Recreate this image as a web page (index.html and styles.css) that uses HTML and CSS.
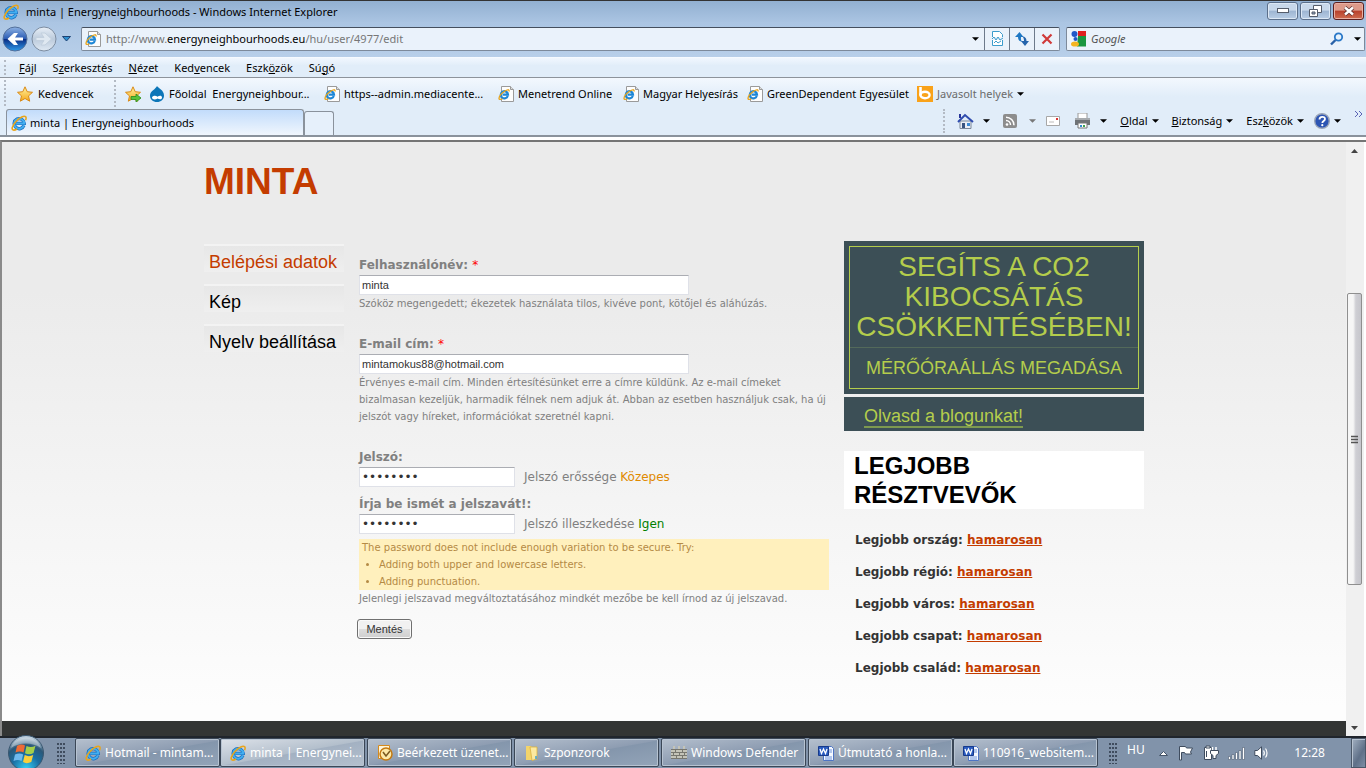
FILE: index.html
```html
<!DOCTYPE html>
<html lang="hu">
<head>
<meta charset="utf-8">
<title>minta | Energyneighbourhoods</title>
<link rel="stylesheet" href="styles.css">
</head>
<body>
<svg class="defs" aria-hidden="true">
  <defs>
    <linearGradient id="gStar" x1="0" y1="0" x2="0" y2="1"><stop offset="0" stop-color="#fff3a0"/><stop offset="1" stop-color="#f5a81c"/></linearGradient>
    <linearGradient id="gBack" x1="0" y1="0" x2="0" y2="1"><stop offset="0" stop-color="#8fb3e4"/><stop offset=".48" stop-color="#2c5db5"/><stop offset=".52" stop-color="#0b2f86"/><stop offset="1" stop-color="#2f9bea"/></linearGradient>
    <linearGradient id="gFwd" x1="0" y1="0" x2="0" y2="1"><stop offset="0" stop-color="#e8eff7"/><stop offset=".5" stop-color="#bccbdc"/><stop offset="1" stop-color="#dfe9f3"/></linearGradient>
    <radialGradient id="gOrb" cx=".5" cy=".95" r=".9"><stop offset="0" stop-color="#35d0f5"/><stop offset=".45" stop-color="#1a6fa3"/><stop offset=".75" stop-color="#2b5878"/><stop offset="1" stop-color="#b9cbd9"/></radialGradient>
  </defs>
  <symbol id="ie" viewBox="0 0 16 16">
    <path d="M12.9 10.4A5 5 0 1 1 13.2 8.4H5.2" fill="none" stroke="#1c6fc0" stroke-width="3.4"/>
    <path d="M12.9 10.4A5 5 0 1 1 13.2 8.4H5.2" fill="none" stroke="#41aef0" stroke-width="2"/>
    <path d="M14.6 5.2C16 1.8 14.2.4 10.8 2 6.500 4 2.200 9 1.300 12.500.6 15.400 3 15.800 6 14" fill="none" stroke="#e8a51c" stroke-width="1.600"/>
  </symbol>
  <symbol id="page" viewBox="0 0 16 16">
    <path d="M3.500.5h9l3 3v12h-12z" fill="#fdfdfd" stroke="#9a9a9a"/><path d="M12.500.5v3h3" fill="#ddd" stroke="#9a9a9a"/>
    <path d="M9.800 10A3.600 3.600 0 1 1 10 8.600H4.500" fill="none" stroke="#1d86d6" stroke-width="2.200"/>
    <path d="M11 5.500C11.500 3 9 3.500 6.500 5.200 3.500 7.400 1 10.500 1 12.500c0 1.500 2 1 3.500.2" fill="none" stroke="#e8a51c" stroke-width="1.300"/>
  </symbol>
  <symbol id="star" viewBox="0 0 16 16"><path d="M8 .8l2.200 4.900 5.300.6-4 3.600 1.200 5.300L8 12.500l-4.700 2.700 1.200-5.300-4-3.600 5.300-.6z" fill="url(#gStar)" stroke="#d98a17"/></symbol>
  <symbol id="down" viewBox="0 0 8 4"><path d="M0 0h8L4 4z" fill="currentColor"/></symbol>
  <symbol id="word" viewBox="0 0 16 16">
    <path d="M5.500 1.500h8l2 2v12h-10z" fill="#f4f8ff" stroke="#4d74c4"/><path d="M11 5h3M11 7h3M7 12h7M7 14h7" stroke="#6f93d8"/>
    <path d="M.5 1.500h10v9H.5z" fill="#2b5cc0" stroke="#16398a"/><path d="M2 4l1.500 4.500L5.500 4l2 4.500L9 4" fill="none" stroke="#fff" stroke-width="1.300"/>
  </symbol>
</svg>

<header class="browser">
  <div class="titlebar">
    <svg class="i16"><use href="#ie"/></svg>
    <span class="grow">minta | Energyneighbourhoods - Windows Internet Explorer</span>
    <div class="winbtns">
      <button type="button" aria-label="Kis méret"><svg width="12" height="6"><rect x=".5" y=".5" width="11" height="4" fill="#fff" stroke="#555d6b"/></svg></button>
      <button type="button" aria-label="Előző méret"><svg width="13" height="12"><path d="M4.500.5h8v7h-8z" fill="#fff" stroke="#555d6b"/><path d="M.5 4.500h8v7h-8z" fill="#fff" stroke="#555d6b"/><path d="M3 7h3v2H3z" fill="#8ea3bd" stroke="#555d6b"/></svg></button>
      <button type="button" class="close" aria-label="Bezárás"><svg width="12" height="10" viewBox="0 0 12 10"><path d="M2 1.500l8 7M10 1.500l-8 7" stroke="#5a3030" stroke-width="4"/><path d="M2 1.500l8 7M10 1.500l-8 7" stroke="#fff" stroke-width="2.400"/></svg></button>
    </div>
  </div>

  <div class="nav">
    <button type="button" class="plain" aria-label="Vissza"><svg width="26" height="26"><circle cx="13" cy="13" r="12" fill="url(#gBack)" stroke="#53709b"/><path d="M21 11.500h-8L16 7h-4L5.500 13l6.500 6h4l-3-4.500h8z" fill="#fff"/></svg></button>
    <button type="button" class="plain" aria-label="Előre"><svg width="26" height="26"><circle cx="13" cy="13" r="12" fill="url(#gFwd)" stroke="#7d8da1"/><path d="M5 11.500h8L10 7h4l6.500 6-6.500 6h-4l3-4.500H5z" fill="#dfe8f1" stroke="#c3d0de"/></svg></button>
    <button type="button" class="plain recent" aria-label="Legutóbbi lapok"><svg width="9" height="6"><path d="M.5.500h8l-4 4.500z" fill="#2d8fd0" stroke="#1d4274"/></svg></button>
    <div class="address">
      <svg class="i16"><use href="#page"/></svg>
      <div class="url grow" role="textbox" contenteditable="true" aria-label="Cím">http://www.<b>energyneighbourhoods.eu</b>/hu/user/4977/edit</div>
      <button type="button" class="plain drop" aria-label="Címlista"><svg class="tri"><use href="#down"/></svg></button>
      <button type="button" class="seg" aria-label="Kompatibilitási nézet"><svg width="13" height="15"><path d="M1.500 6V.5h7l3 3V6M1.500 9v5.500h10V9" fill="#fff" stroke="#3c9ccc"/><path d="M1 8l2-2 2 3 2-3 2 3 3-2M3 12l2-2 2 2 3-2" fill="none" stroke="#3c9ccc"/></svg></button>
      <button type="button" class="seg" aria-label="Frissítés"><svg width="14" height="14"><path d="M4.500 0L0 5h3c0 3 1.500 4.500 4 4.500C5.500 8 6 6 6 5h2.500z" fill="#1f78c4"/><path d="M10 14l4-5h-2.500c0-3-1.500-4.500-4-4.500 1.500 1.500 1.500 3.500 1.500 4.500H6z" fill="#2464ac"/></svg></button>
      <button type="button" class="seg" aria-label="Leállítás"><svg width="12" height="12"><path d="M1.500 1.500l9 9M10.500 1.500l-9 9" stroke="#d03a3a" stroke-width="2.200"/></svg></button>
    </div>
    <div class="search">
      <svg width="16" height="16"><path d="M0 0h8v16H0z" fill="#eef6ff"/><path d="M8 0h8v6H8z" fill="#e02020"/><path d="M8 5h8v10.500H7z" fill="#1a9640"/><circle cx="4.500" cy="3" r="3" fill="#2259c9"/><circle cx="5.500" cy="8" r="2" fill="#2259c9"/><ellipse cx="5" cy="13" rx="4" ry="2.600" fill="#f3b521"/></svg>
      <input type="text" placeholder="Google" aria-label="Keresés">
      <button type="button" class="plain" aria-label="Keresés indítása"><svg width="14" height="14"><circle cx="8.500" cy="5" r="3.700" fill="#e7f3fd" stroke="#2a78c8" stroke-width="1.800"/><path d="M5.500 8L1 12.500" stroke="#2a62a8" stroke-width="2.400"/></svg></button>
      <button type="button" class="plain" aria-label="Keresők"><svg class="tri"><use href="#down"/></svg></button>
    </div>
  </div>

  <nav class="menu grip">
    <a href="#"><u>F</u>ájl</a><a href="#">S<u>z</u>erkesztés</a><a href="#"><u>N</u>ézet</a><a href="#">Ked<u>v</u>encek</a><a href="#">Eszk<u>ö</u>zök</a><a href="#">Sú<u>g</u>ó</a>
  </nav>

  <div class="favs grip">
    <button type="button" class="plain fav favmain"><svg class="i16"><use href="#star"/></svg>Kedvencek</button>
    <div class="links grip">
      <button type="button" class="plain" aria-label="Hozzáadás"><svg class="i16"><use href="#star"/><path d="M6 10.500h5V8l5 4-5 4v-2.500H6z" fill="#58c23a" stroke="#2a8a1c" stroke-width=".8"/></svg></button>
      <a class="fav f1" href="#"><svg class="i16"><path d="M8 0C9 2 15 4 15 9.500 15 13.500 12 16 8 16S1 13.500 1 9.500C1 5 7 3 8 0z" fill="#0c76b8"/><path d="M3 11c2-2 4-1.500 5.500-.3C10 9.500 13 9 13 11.500S10 13.500 8.500 12.500C6.500 14 3 14 3 11z" fill="#fff"/></svg><span>Főoldal&nbsp; Energyneighbour...</span></a>
      <a class="fav f2" href="#"><svg class="i16"><use href="#page"/></svg><span>https--admin.mediacente...</span></a>
      <a class="fav f3" href="#"><svg class="i16"><use href="#page"/></svg><span>Menetrend Online</span></a>
      <a class="fav f4" href="#"><svg class="i16"><use href="#page"/></svg><span>Magyar Helyesírás</span></a>
      <a class="fav f5" href="#"><svg class="i16"><use href="#page"/></svg><span>GreenDependent Egyesület</span></a>
      <a class="fav f6" href="#"><svg class="i16"><rect width="16" height="16" fill="#f9a21a"/><path d="M3.500 1v8.500" stroke="#fff" stroke-width="2.600"/><ellipse cx="8" cy="9" rx="4.600" ry="3.200" fill="none" stroke="#fff" stroke-width="2.400"/></svg><span>Javasolt helyek</span><svg class="tri"><use href="#down"/></svg></a>
    </div>
  </div>

  <div class="tabs">
    <button type="button" class="tab"><svg class="i16"><use href="#ie"/></svg>minta | Energyneighbourhoods</button>
    <button type="button" class="newtab" aria-label="Új lap"></button>
    <div class="commands grip">
      <button type="button" class="plain cmd c1" aria-label="Kezdőlap"><svg width="17" height="17"><path d="M3 8h11v7.500H3z" fill="#e9edf5" stroke="#7b8799"/><path d="M1 9l7-7 8 7" fill="none" stroke="#2f4cae" stroke-width="2"/><path d="M3 1v4" stroke="#28359a" stroke-width="2"/><path d="M5 10h3v5H5z" fill="#39537f"/><path d="M10 10h3v3h-3z" fill="#3d8ad4"/></svg><svg class="tri"><use href="#down"/></svg></button>
      <button type="button" class="plain cmd c2" aria-label="Hírcsatornák"><svg width="14" height="14"><rect width="14" height="14" rx="2" fill="#8d8d8d"/><circle cx="4" cy="10.500" r="1.300" fill="#fff"/><path d="M3 6.500a4.500 4.500 0 0 1 4.500 4.500M3 3.200a8 8 0 0 1 8 8" fill="none" stroke="#fff" stroke-width="1.500"/></svg><svg class="tri dim"><use href="#down"/></svg></button>
      <button type="button" class="plain cmd" aria-label="Levelek"><svg width="15" height="11"><path d="M.5.500h13v9H.5z" fill="#fff" stroke="#a7a7a7"/><path d="M10 2h2v2h-2z" fill="#d33"/><path d="M3 6h5" stroke="#bbb"/></svg></button>
      <button type="button" class="plain cmd c3" aria-label="Nyomtatás"><svg width="17" height="16"><path d="M4 0h9v6H4z" fill="#fff" stroke="#999"/><path d="M1 5h15v7H1z" fill="#6e7276"/><path d="M1 5h15v2H1z" fill="#a7abaf"/><path d="M4 10h9v5H4z" fill="#fff" stroke="#777"/><path d="M6 12h2v2H6z" fill="#2f8ad0"/><path d="M9 12h2v2H9z" fill="#3fa34a"/></svg><svg class="tri"><use href="#down"/></svg></button>
      <button type="button" class="plain cmd txt"><span><u>O</u>ldal</span><svg class="tri"><use href="#down"/></svg></button>
      <button type="button" class="plain cmd txt"><span><u>B</u>iztonság</span><svg class="tri"><use href="#down"/></svg></button>
      <button type="button" class="plain cmd txt"><span>Esz<u>k</u>özök</span><svg class="tri"><use href="#down"/></svg></button>
      <button type="button" class="plain cmd help" aria-label="Súgó"><svg width="16" height="16"><circle cx="8" cy="8" r="7.300" fill="#2c55b4" stroke="#9aa5b8" stroke-width="1.400"/><path d="M5.500 6.500c0-3.500 5.500-3.500 5.500-.5 0 2-2.700 2-2.700 4" fill="none" stroke="#fff" stroke-width="1.800"/><circle cx="8.300" cy="12.200" r="1.100" fill="#fff"/></svg><svg class="tri"><use href="#down"/></svg></button>
      <svg class="more" width="9" height="6"><path d="M1 0l3 3-3 3M5 0l3 3-3 3" fill="none" stroke="#5b63b5"/></svg>
    </div>
  </div>
</header>

<div class="view">
  <div class="site">
    <div class="wrap">
      <h1>MINTA</h1>
      <div class="cols">
        <nav class="side">
          <a class="on" href="#">Belépési adatok</a>
          <a href="#">Kép</a>
          <a href="#">Nyelv beállítása</a>
        </nav>
        <form class="form">
          <div class="item">
            <label for="name">Felhasználónév: <i>*</i></label>
            <input id="name" type="text" value="minta">
            <p>Szóköz megengedett; ékezetek használata tilos, kivéve pont, kötőjel és aláhúzás.</p>
          </div>
          <div class="item">
            <label for="mail">E-mail cím: <i>*</i></label>
            <input id="mail" type="text" value="mintamokus88@hotmail.com">
            <p>Érvényes e-mail cím. Minden értesítésünket erre a címre küldünk. Az e-mail címeket<br>bizalmasan kezeljük, harmadik félnek nem adjuk át. Abban az esetben használjuk csak, ha új<br>jelszót vagy híreket, információkat szeretnél kapni.</p>
          </div>
          <div class="item">
            <label for="p1">Jelszó:</label>
            <div class="pw"><input id="p1" type="password" value="abcdefgh"><span>Jelszó erőssége <b class="mid">Közepes</b></span></div>
            <label class="second" for="p2">Írja be ismét a jelszavát!:</label>
            <div class="pw"><input id="p2" type="password" value="abcdefgh"><span>Jelszó illeszkedése <b class="ok">Igen</b></span></div>
            <div class="hint">The password does not include enough variation to be secure. Try:
              <ul><li>Adding both upper and lowercase letters.</li><li>Adding punctuation.</li></ul>
            </div>
            <p>Jelenlegi jelszavad megváltoztatásához mindkét mezőbe be kell írnod az új jelszavad.</p>
            <button type="button" class="save">Mentés</button>
          </div>
        </form>
        <aside class="right">
          <div class="promo">
            <div class="frame">
              <h2>SEGÍTS A CO2 KIBOCSÁTÁS CSÖKKENTÉSÉBEN!</h2>
              <a href="#">MÉRŐÓRAÁLLÁS MEGADÁSA</a>
            </div>
          </div>
          <div class="blog"><a href="#">Olvasd a blogunkat!</a></div>
          <h3>LEGJOBB<br>RÉSZTVEVŐK</h3>
          <ul class="best">
            <li>Legjobb ország: <a href="#">hamarosan</a></li>
            <li>Legjobb régió: <a href="#">hamarosan</a></li>
            <li>Legjobb város: <a href="#">hamarosan</a></li>
            <li>Legjobb csapat: <a href="#">hamarosan</a></li>
            <li>Legjobb család: <a href="#">hamarosan</a></li>
          </ul>
        </aside>
      </div>
    </div>
    <footer></footer>
  </div>
  <div class="scroll" aria-hidden="true">
    <svg width="7" height="4"><path d="M0 4h7L3.500 0z" fill="#444"/></svg>
    <div class="track"><div class="thumb"><svg width="8" height="9"><path d="M0 1.500h7M0 4.500h7M0 7.500h7" stroke="#555" stroke-width="1.600"/></svg></div></div>
    <svg width="7" height="4"><path d="M0 0h7L3.500 4z" fill="#444"/></svg>
  </div>
</div>

<footer class="taskbar">
  <button type="button" class="plain orb" aria-label="Start"><svg width="38" height="36" viewBox="0 0 38 36"><circle cx="19" cy="19" r="17.500" fill="url(#gOrb)" stroke="#39566f"/><path d="M10 12c3-2 6-2 8-.5l-1.500 7c-2.500-1.500-5-1.500-8 0z" fill="#ee6b35"/><path d="M19.500 12c3 1.500 6 1.500 9-.3L26.500 19c-3 1.700-6 1.500-8.500.2z" fill="#a4cf4b"/><path d="M8 20.500c3-1.500 6-1.500 8.200 0L14.500 27c-2.500-1.500-5-1.500-8 0z" fill="#6fb9ee"/><path d="M17.700 21c3 1.500 5.500 1.500 8.500 0L24.300 28c-3 1.500-6 1.500-8.300 0z" fill="#fbcf3b"/><path d="M4 14C8 0 30 0 34 14 26 8 12 8 4 14z" fill="#fff" opacity=".35"/></svg></button>
  <span class="dots"></span>
  <div class="group"><button type="button" class="task"><svg class="i16"><use href="#ie"/></svg><span>Hotmail - mintam...</span></button><button type="button" class="task active"><svg class="i16"><use href="#ie"/></svg><span>minta | Energynei...</span></button></div>
  <div class="group"><button type="button" class="task"><svg class="i16"><path d="M1.500.5h11v13h-11z" fill="#fff5d8" stroke="#d58a1e"/><circle cx="9" cy="9" r="6" fill="#fde9a8" stroke="#c47a12" stroke-width="1.500"/><path d="M6 7l3 4 4-5" fill="none" stroke="#7a5a20" stroke-width="1.500"/></svg><span>Beérkezett üzenet...</span></button></div>
  <div class="group"><button type="button" class="task"><svg class="i16"><path d="M2 1h5l1 2v12H2z" fill="#f3d46b"/><path d="M6 2h7v12l-5 1.500z" fill="#fbe9a0" stroke="#d8b040" stroke-width=".8"/><path d="M12 11v3" stroke="#38a0d8" stroke-width="1.500"/></svg><span>Szponzorok</span></button></div>
  <div class="group"><button type="button" class="task"><svg class="i16"><path d="M0 4h2V1h2v3h3V1h2v3h3V1h2v3h2v10H0z" fill="#c4c4b8"/><path d="M0 4.500h16M0 7.500h16M0 10.500h16M0 13.500h16M4.500 4v3M11.500 4v3M8.500 7v4M2.500 7v3M13.500 7v3M5.500 11v3M11.500 11v3" stroke="#77776f"/></svg><span>Windows Defender</span></button></div>
  <div class="group"><button type="button" class="task"><svg class="i16"><use href="#word"/></svg><span>Útmutató a honla...</span></button><button type="button" class="task"><svg class="i16"><use href="#word"/></svg><span>110916_websitem...</span></button></div>
  <div class="tray">
    <span class="dots"></span>
    <span class="lang">HU</span>
    <svg width="9" height="5"><path d="M.5 4.500h8L4.500.5z" fill="#fff" stroke="#455468"/></svg>
    <svg width="17" height="16"><path d="M2.500 15V1.500h6l1 1.500h6l-2 4 1 2h-6l-1-1.500h-3V15z" fill="#fff" stroke="#3f4c5e"/></svg>
    <svg width="16" height="16"><path d="M1.500 2.500h7v12h-7z" fill="#fff" stroke="#3f4c5e"/><path d="M3 1h4v2H3zM3.500 6v6" fill="#fff" stroke="#3f4c5e"/><path d="M9.500 6V2M13 6V2" stroke="#fff" stroke-width="1.500"/><path d="M7.500 5.500h8v3l-2.500 2v3h-3v-3l-2.500-2z" fill="#fff" stroke="#3f4c5e"/></svg>
    <svg width="17" height="13"><path d="M.5 9.500h2v3h-2zM4 7.500h2v5H4zM7.500 5.500h2v7h-2zM11 3.500h2v9h-2zM14.500.5h2v12h-2z" fill="#fff" stroke="#4b5a6e" stroke-width=".6"/></svg>
    <svg width="14" height="14"><path d="M.8 4.500h2.700L7.500.8v12.400L3.500 9.500H.8z" fill="#fff" stroke="#3f4c5e"/><path d="M9.500 4.500c1 1.500 1 3.500 0 5M11.500 2.500c2 2.500 2 6.500 0 9" fill="none" stroke="#fff" stroke-width="1.200"/></svg>
    <time>12:28</time>
    <button type="button" class="desk" aria-label="Asztal megjelenítése"></button>
  </div>
</footer>
</body>
</html>
```
FILE: styles.css
```css
* { box-sizing: border-box; }
body {
  margin: 0;
  height: 100vh;
  display: flex;
  flex-direction: column;
  overflow: hidden;
  font: 11px/16px "Noto Sans", "Open Sans", sans-serif;
  color: #000;
}
h1, h2, h3, p, ul { margin: 0; padding: 0; }
a { color: inherit; text-decoration: none; }
button { font: inherit; color: inherit; cursor: pointer; }
svg { flex: none; display: block; }
.defs { position: absolute; width: 0; height: 0; }
.i16 { width: 16px; height: 16px; }
.tri { width: 7px; height: 4px; }
.dim { color: #777; }
.grow { flex: 1; }
.plain { border: 0; padding: 0; background: none; display: flex; align-items: center; }

/* browser frame */
.browser { flex: none; background: #e1edf9; border-bottom: 1px solid #8a929c; }
.titlebar {
  display: flex;
  align-items: center;
  height: 22px;
  padding: 0 2px 0 3px;
  gap: 7px;
  border-top: 1px solid #333;
  background: linear-gradient(#92b0d1, #aac4e2);
}
.winbtns { display: flex; gap: 2px; align-self: flex-start; }
.winbtns button {
  width: 31px;
  height: 18px;
  margin-top: 1px;
  padding: 0;
  display: flex;
  align-items: center;
  justify-content: center;
  border: 1px solid #5b6f8a;
  border-radius: 3px;
  box-shadow: inset 0 0 0 1px #dce8f5;
  background: linear-gradient(#c8d8ea 45%, #9db5d2 50%, #b9cee6);
}
.winbtns .close { border-color: #5c2020; box-shadow: inset 0 0 0 1px #e8b0a4; background: linear-gradient(#dd9a8a 45%, #b8402c 50%, #cf6c50); }
.nav {
  display: flex;
  align-items: center;
  height: 35px;
  padding: 0 1px 2px 2px;
  background: linear-gradient(#abc5e3, #b8cfe9);
}
.nav > .plain { margin-right: 3px; }
.nav > .recent { margin: 0 10px 0 2px; }
.address, .search {
  display: flex;
  align-items: center;
  height: 24px;
  background: #eaf2fb;
  border: 1px solid #7d8a9b;
  border-radius: 2px;
}
.address { flex: 1; padding-left: 3px; gap: 5px; border-top-color: #454f5e; }
.url { color: #777; outline: 0; }
.url b { font-weight: 400; color: #000; }
.drop { padding-right: 1px; }
.seg {
  align-self: stretch;
  width: 25px;
  margin-left: -1px;
  padding: 0;
  display: flex;
  align-items: center;
  justify-content: center;
  border: 0;
  border-left: 1px solid #6d7a8b;
  background: none;
}
.seg + .seg { margin-left: -5px; }
.search { width: 299px; margin-left: 6px; padding: 0 3px; gap: 5px; border-top-color: #454f5e; }
.search input { flex: 1; min-width: 0; border: 0; padding: 0; background: none; outline: 0; font: italic 11px/16px "Noto Sans", sans-serif; }
.search input::placeholder { color: #555; opacity: 1; }
.search .plain + .plain { margin-left: 5px; }

.grip { position: relative; }
.grip::before {
  content: "";
  position: absolute;
  left: 4px;
  top: 2px;
  bottom: 2px;
  border-left: 2px dotted #b3bac4;
}
.menu {
  display: flex;
  align-items: center;
  gap: 16px;
  height: 21px;
  padding-left: 19px;
  border-top: 1px solid #f6faff;
  border-bottom: 1px solid #8d939b;
  background: linear-gradient(#f1f7fe, #e1edf9 40%);
}
.favs { display: flex; align-items: center; height: 31px; padding-left: 17px; background: linear-gradient(#f3f8fe, #e1edf9 60%); }
.favs::before { bottom: 3px; }
.fav { display: flex; align-items: center; gap: 4px; white-space: nowrap; }
.favmain { width: 93px; gap: 5px; }
.links { display: flex; align-self: stretch; align-items: center; padding-left: 15px; gap: 8px; }
.f1 { width: 167px; }
.f2 { width: 166px; }
.f3 { width: 117px; }
.f4 { width: 116px; }
.f5 { width: 162px; }
.f6 { color: #6b6b6b; }
.f6 .tri { color: #000; }

.tabs { display: flex; align-items: flex-end; height: 27px; padding-left: 6px; border-bottom: 1px solid #8a929c; }
.tab, .newtab { border: 1px solid #8a929c; border-bottom: 0; border-radius: 3px 3px 0 0; }
.tab {
  display: flex;
  align-items: center;
  gap: 3px;
  width: 298px;
  height: 26px;
  padding: 0 4px;
  background: linear-gradient(#c2dcfb, #f0f6fd);
}
.newtab { width: 30px; height: 24px; background: #e6f0fb; }
.commands { display: flex; align-items: center; height: 28px; gap: 13px; margin-left: auto; padding: 0 3px 0 18px; }
.cmd { gap: 4px; }
.c1, .c3 { gap: 9px; }
.c2 { gap: 12px; }
.c2 + .cmd, .help { margin-left: -3px; }
.more { margin-bottom: 14px; }

/* page view */
.view { flex: 1; min-height: 0; display: flex; margin-top: 3px; border-top: 2px solid #757575; border-left: 2px solid #8a8a8a; }
.site {
  flex: 1;
  display: flex;
  flex-direction: column;
  overflow: hidden;
  background: linear-gradient(#ebebeb 25%, #fdfdfd 95%);
  font-family: "DejaVu Sans", Verdana, sans-serif;
  color: #808080;
}
.wrap { flex: 1; width: 940px; max-width: 100%; margin: 0 auto; padding-top: 20px; }
.site > footer { height: 15px; background: #333534; }
h1 { font: bold 37px/40px "Liberation Sans", Arial, sans-serif; color: #c43c00; }
.cols { display: grid; grid-template-columns: 140px 1fr 300px; gap: 15px; margin-top: 39px; }
.side { padding-top: 3px; }
.side a {
  display: block;
  height: 28px;
  margin-bottom: 12px;
  padding: 4px 5px 0;
  border-top: 2px solid #f3f3f3;
  background: linear-gradient(#e7e7e7, #efefef);
  font: 18px/24px "Liberation Sans", Arial, sans-serif;
  color: #000;
  white-space: nowrap;
}
.side .on { color: #c43c00; }

.form { padding-top: 14px; }
.item { margin-bottom: 22px; font-size: 10px; line-height: 17px; }
.item p { white-space: nowrap; }
.item label { display: block; font-size: 12px; line-height: 20px; font-weight: bold; }
.item label i { color: #f00; font-style: normal; font-weight: normal; }
.item input {
  display: block;
  width: 330px;
  height: 20px;
  padding: 0 2px;
  border: 1px solid #dfe1e8;
  border-top-color: #abadb3;
  background: #fff;
  color: #333;
  font: 11px/16px "Liberation Sans", Arial, sans-serif;
}
.pw { display: flex; align-items: center; gap: 9px; font-size: 12px; line-height: 20px; }
.item .pw input { width: 156px; font: 12px/16px "DejaVu Sans", sans-serif; }
.pw b { font-weight: normal; }
.mid { color: #e08a00; }
.ok { color: #008000; }
.item .second { margin-top: 7px; }
.hint { margin-top: 5px; padding: 0 3px; background: #fff0bd; color: #b58a45; }
.hint ul { padding-left: 17px; }
.save {
  margin: 12px 0 0 -2px;
  height: 20px;
  width: 55px;
  padding: 0;
  border: 1px solid #707070;
  border-radius: 3px;
  box-shadow: inset 0 0 0 1px #fafafa;
  background: linear-gradient(#f1f1f1 48%, #dcdcdc 52%, #cfcfcf);
  color: #333;
  font: 11px/16px "Liberation Sans", Arial, sans-serif;
}

.promo, .blog { background: #3c4f56; color: #b4cd4c; font-family: "Liberation Sans", Arial, sans-serif; }
.promo { padding: 5px; }
.frame { border: 1px solid #b4cd4c; text-align: center; }
.frame h2 { padding: 5px 0; border-bottom: 1px solid #53695a; font-size: 28px; line-height: 30px; font-weight: normal; }
.frame a { display: block; font-size: 18px; line-height: 40px; }
.blog { height: 34px; margin-top: 3px; padding: 9px 20px 0; font-size: 18px; line-height: 20px; }
.blog a { display: inline-block; border-bottom: 2px solid #7d9950; }
.right h3 { margin: 20px 0 15px; padding: 0 10px; background: #fff; color: #000; font: bold 24px/29px "Liberation Sans", Arial, sans-serif; }
.best { list-style: none; padding-left: 11px; color: #333; font-size: 12px; line-height: 32px; font-weight: bold; }
.best a { color: #c43c00; text-decoration: underline; }

.scroll { flex: none; width: 20px; display: flex; flex-direction: column; align-items: center; padding: 7px 2px 6px 1px; background: #f0f0f0; border-right: 2px solid #fff; }
.track { flex: 1; align-self: stretch; display: flex; flex-direction: column; }
.thumb {
  height: 51%;
  margin-top: 140px;
  display: flex;
  align-items: center;
  justify-content: center;
  border: 1px solid #8f8f8f;
  border-radius: 2px;
  background: linear-gradient(90deg, #f6f6f6 40%, #cfcfd4 60%, #c6c6cc);
}

/* taskbar */
.taskbar { flex: none; display: flex; height: 32px; padding-left: 7px; border-top: 2px solid #20252c; background: #8193aa; color: #fff; font-size: 12px; }
.orb { align-items: flex-start; margin-top: -4px; }
.dots { width: 9px; height: 21px; margin: 5px 0 0 12px; background: radial-gradient(circle at 1px 1px, #3f4c5e 1px, transparent 1px) 0 0 / 3px 4px; }
.group { display: flex; margin-left: 2px; }
.dots + .group { margin-left: 9px; }
.task {
  display: flex;
  align-items: center;
  gap: 4px;
  width: 145px;
  height: 29px;
  padding: 0 2px 0 9px;
  border: 1px solid #3b4757;
  border-radius: 2px;
  box-shadow: inset 0 0 0 1px #b7c3d1;
  background: linear-gradient(170deg, #b5c0ce, #8e9db2 50%, #8496ac 52%, #93a4b8);
  white-space: nowrap;
}
.active { background: linear-gradient(170deg, #dde2e9, #b3bfcc 50%, #a3b1c2 52%, #b4c0ce); }
.tray { flex: 1; display: flex; align-items: center; gap: 9px; }
.tray .dots { margin: 0 0 0 11px; }
.lang { margin-bottom: 6px; margin-right: 5px; }
.tray time { margin-left: auto; margin-right: 17px; }
.desk { width: 15px; height: 30px; padding: 0; border: 1px solid #4a5768; box-shadow: inset 1px 1px 0 #b7c3d1; background: linear-gradient(120deg, #a3b1c2, #5f7088 60%, #7d8ea5); }
```
